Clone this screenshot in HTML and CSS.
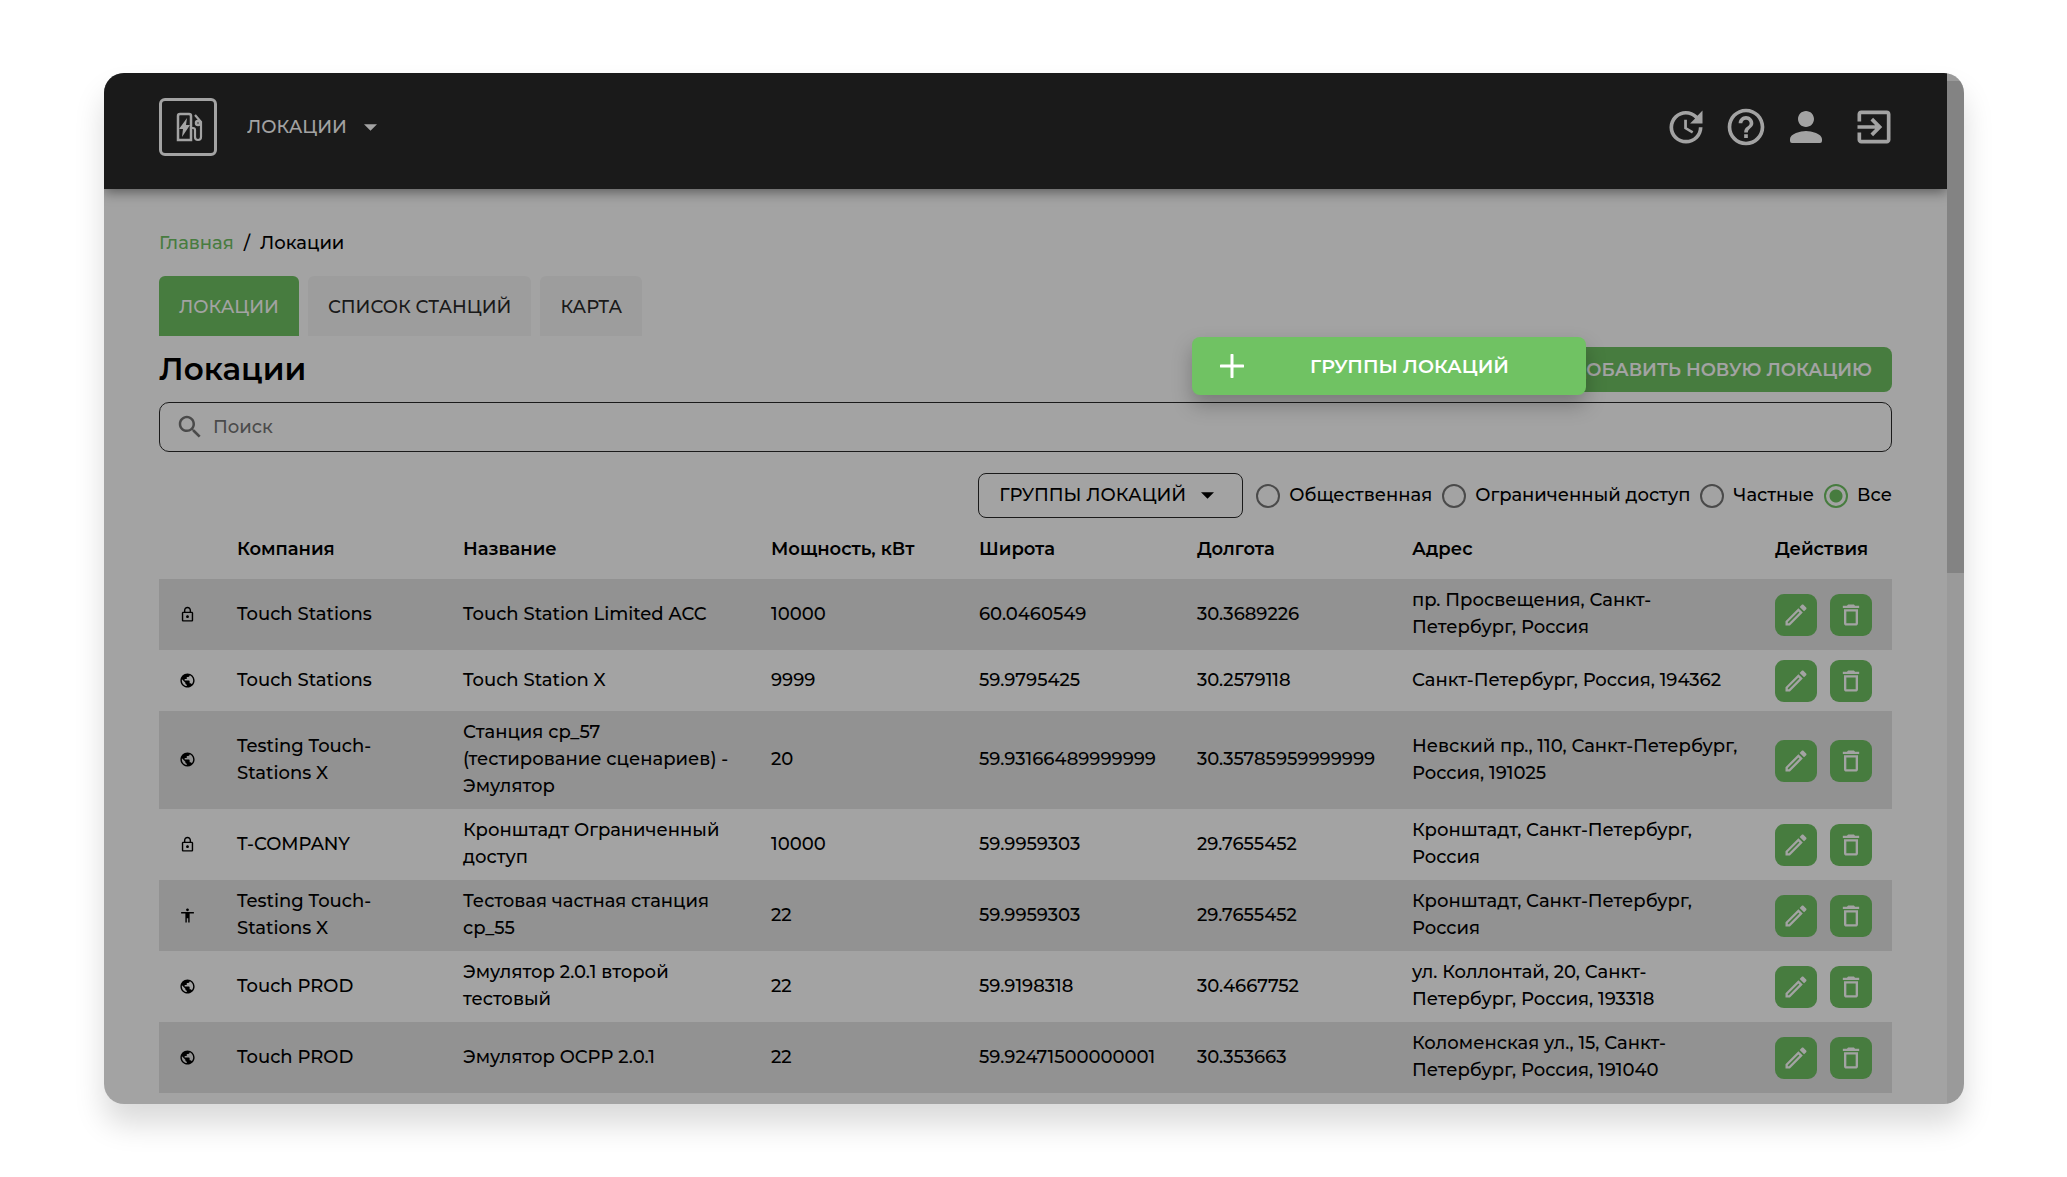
FILE: index.html
```html
<!DOCTYPE html>
<html lang="ru">
<head>
<meta charset="utf-8">
<title>Локации</title>
<link rel="stylesheet" href="styles.css">
</head>
<body>
<svg class="sprite" aria-hidden="true">
  <symbol id="i-lock" viewBox="0 0 24 24"><path d="M18 8h-1V6c0-2.760-2.240-5-5-5S7 3.240 7 6v2H6c-1.100 0-2 .9-2 2v10c0 1.100.9 2 2 2h12c1.100 0 2-.9 2-2V10c0-1.100-.9-2-2-2zM9 6c0-1.660 1.340-3 3-3s3 1.340 3 3v2H9V6zm9 14H6V10h12v10zm-6-3c1.100 0 2-.9 2-2s-.9-2-2-2-2 .9-2 2 .9 2 2 2z"/></symbol>
  <symbol id="i-globe" viewBox="0 0 24 24"><path d="M12 2C6.480 2 2 6.480 2 12s4.480 10 10 10 10-4.480 10-10S17.520 2 12 2zm-1 17.930c-3.950-.49-7-3.850-7-7.930 0-.62.080-1.210.210-1.790L9 15v1c0 1.100.9 2 2 2v1.930zm6.900-2.540c-.26-.81-1-1.390-1.900-1.390h-1v-3c0-.55-.45-1-1-1H8v-2h2c.55 0 1-.45 1-1V7h2c1.100 0 2-.9 2-2v-.41c2.930 1.190 5 4.060 5 7.410 0 2.080-.8 3.970-2.100 5.390z"/></symbol>
  <symbol id="i-man" viewBox="0 0 24 24"><path d="M12 2c1.100 0 2 .9 2 2s-.9 2-2 2-2-.9-2-2 .9-2 2-2zm9 7h-6v13h-2v-6h-2v6H9V9H3V7h18v2z"/></symbol>
  <symbol id="i-edit" viewBox="0 0 24 24"><path d="M14.060 9.020l.92.92L5.920 19H5v-.92l9.060-9.060M17.660 3c-.25 0-.51.1-.7.290l-1.830 1.830 3.750 3.750 1.830-1.830c.39-.39.39-1.020 0-1.410l-2.340-2.340c-.2-.2-.45-.29-.71-.29zm-3.600 3.190L3 17.250V21h3.750L17.810 9.940l-3.750-3.750z"/></symbol>
  <symbol id="i-trash" viewBox="0 0 24 24"><path d="M6 19c0 1.100.9 2 2 2h8c1.100 0 2-.9 2-2V7H6v12zM8 9h8v10H8V9zm7.500-5l-1-1h-5l-1 1H5v2h14V4z"/></symbol>
  <symbol id="i-arrow" viewBox="0 0 12 6"><path d="M0 0h12L6 6z"/></symbol>
</svg>

<div class="window">
  <div class="page">
    <header class="topbar">
      <a class="logo" href="#" aria-label="Touch Stations">
        <svg viewBox="0 0 28 30" width="28" height="30"><g fill="none" stroke="currentColor" stroke-width="2.500"><path d="M2 28V4q0-2 2-2h9q2 0 2 2v24z"/><path stroke-width="2.200" d="M15 16h2q2 0 2 2v7q0 3 3 3t3-3V10l-6-7"/><circle cx="22" cy="11" r="2"/></g><path d="M11 6L3 17h4l-1 8 8-12h-4z" fill="currentColor"/></svg>
      </a>
      <div class="menu">
        <select aria-label="Раздел"><option>ЛОКАЦИИ</option></select>
        <svg class="arrow"><use href="#i-arrow"/></svg>
      </div>
      <nav class="tools">
        <a href="#" aria-label="Обновления"><svg viewBox="0 0 24 24"><path d="M21 10.120h-6.780l2.740-2.820c-2.730-2.700-7.150-2.800-9.880-.1-2.730 2.710-2.730 7.080 0 9.790s7.150 2.710 9.880 0C18.320 15.650 19 14.080 19 12.100h2c0 1.980-.88 4.550-2.640 6.290-3.510 3.480-9.210 3.480-12.720 0-3.500-3.470-3.530-9.110-.02-12.580s9.140-3.470 12.650 0L21 3v7.120zM12.500 8v4.250l3.500 2.080-.72 1.210L11 13V8h1.500z"/></svg></a>
        <a href="#" aria-label="Помощь"><svg viewBox="0 0 24 24"><path d="M11 18h2v-2h-2v2zm1-16C6.480 2 2 6.480 2 12s4.480 10 10 10 10-4.480 10-10S17.520 2 12 2zm0 18c-4.410 0-8-3.590-8-8s3.590-8 8-8 8 3.590 8 8-3.590 8-8 8zm0-14c-2.210 0-4 1.790-4 4h2c0-1.100.9-2 2-2s2 .9 2 2c0 2-3 1.750-3 5h2c0-2.250 3-2.500 3-5 0-2.210-1.790-4-4-4z"/></svg></a>
        <a href="#" aria-label="Профиль"><svg viewBox="1 1 22 22"><path d="M12 12c2.210 0 4-1.790 4-4s-1.790-4-4-4-4 1.790-4 4 1.790 4 4 4zm0 2c-2.670 0-8 1.340-8 4v1q0 1 1 1h14q1 0 1-1v-1c0-2.660-5.330-4-8-4z"/></svg></a>
        <a class="exit" href="#" aria-label="Выход"><svg viewBox="0 0 24 24"><path d="M10.090 15.590L11.500 17l5-5-5-5-1.410 1.410L12.670 11H3v2h9.670l-2.580 2.590zM19 3H5c-1.110 0-2 .9-2 2v4h2V5h14v14H5v-4H3v4c0 1.100.89 2 2 2h14c1.100 0 2-.9 2-2V5c0-1.100-.9-2-2-2z"/></svg></a>
      </nav>
    </header>

    <main class="content">
      <nav class="crumbs"><a href="#">Главная</a><span>/</span><span>Локации</span></nav>

      <nav class="tabs">
        <a class="tab active" href="#">ЛОКАЦИИ</a>
        <a class="tab" href="#">СПИСОК СТАНЦИЙ</a>
        <a class="tab" href="#">КАРТА</a>
      </nav>

      <div class="heading">
        <h1>Локации</h1>
        <button class="add" type="button">ДОБАВИТЬ НОВУЮ ЛОКАЦИЮ</button>
        <button class="spotlight" type="button">
          <svg viewBox="0 0 24 24" width="24" height="24"><path d="M12 1v22M1 12h22" stroke="currentColor" stroke-width="3" stroke-linecap="round"/></svg>
          <span>ГРУППЫ ЛОКАЦИЙ</span>
        </button>
      </div>

      <label class="search">
        <svg viewBox="0 0 24 24" width="30" height="30"><path d="M15.500 14h-.79l-.28-.27C15.410 12.590 16 11.110 16 9.500 16 5.910 13.090 3 9.500 3S3 5.910 3 9.500 5.910 16 9.500 16c1.610 0 3.090-.59 4.230-1.570l.27.280v.79l5 4.990L20.490 19l-4.990-5zm-6 0C7.010 14 5 11.990 5 9.500S7.010 5 9.500 5 14 7.010 14 9.500 11.990 14 9.500 14z"/></svg>
        <input type="text" placeholder="Поиск" aria-label="Поиск">
      </label>

      <div class="filters">
        <div class="groups">
          <select aria-label="Группы локаций"><option>ГРУППЫ ЛОКАЦИЙ</option></select>
          <svg class="arrow"><use href="#i-arrow"/></svg>
        </div>
        <label><input type="radio" name="access">Общественная</label>
        <label><input type="radio" name="access">Ограниченный доступ</label>
        <label><input type="radio" name="access">Частные</label>
        <label><input type="radio" name="access" checked>Все</label>
      </div>

      <table class="locations">
        <colgroup><col class="c-icon"><col class="c-company"><col class="c-name"><col class="c-power"><col class="c-lat"><col class="c-lon"><col><col class="c-actions"></colgroup>
        <thead>
          <tr><th></th><th>Компания</th><th>Название</th><th>Мощность, кВт</th><th>Широта</th><th>Долгота</th><th>Адрес</th><th>Действия</th></tr>
        </thead>
        <tbody>
          <tr>
            <td><svg class="kind"><use href="#i-lock"/></svg></td><td>Touch Stations</td><td>Touch Station Limited ACC</td><td>10000</td><td>60.0460549</td><td>30.3689226</td><td>пр. Просвещения, Санкт-<br>Петербург, Россия</td>
            <td class="actions"><button type="button" aria-label="Изменить"><svg><use href="#i-edit"/></svg></button><button type="button" aria-label="Удалить"><svg><use href="#i-trash"/></svg></button></td>
          </tr>
          <tr>
            <td><svg class="kind"><use href="#i-globe"/></svg></td><td>Touch Stations</td><td>Touch Station X</td><td>9999</td><td>59.9795425</td><td>30.2579118</td><td>Санкт-Петербург, Россия, 194362</td>
            <td class="actions"><button type="button" aria-label="Изменить"><svg><use href="#i-edit"/></svg></button><button type="button" aria-label="Удалить"><svg><use href="#i-trash"/></svg></button></td>
          </tr>
          <tr>
            <td><svg class="kind"><use href="#i-globe"/></svg></td><td>Testing Touch-<br>Stations X</td><td>Станция ср_57<br>(тестирование сценариев) -<br>Эмулятор</td><td>20</td><td>59.93166489999999</td><td>30.35785959999999</td><td>Невский пр., 110, Санкт-Петербург,<br>Россия, 191025</td>
            <td class="actions"><button type="button" aria-label="Изменить"><svg><use href="#i-edit"/></svg></button><button type="button" aria-label="Удалить"><svg><use href="#i-trash"/></svg></button></td>
          </tr>
          <tr>
            <td><svg class="kind"><use href="#i-lock"/></svg></td><td>T-COMPANY</td><td>Кронштадт Ограниченный<br>доступ</td><td>10000</td><td>59.9959303</td><td>29.7655452</td><td>Кронштадт, Санкт-Петербург,<br>Россия</td>
            <td class="actions"><button type="button" aria-label="Изменить"><svg><use href="#i-edit"/></svg></button><button type="button" aria-label="Удалить"><svg><use href="#i-trash"/></svg></button></td>
          </tr>
          <tr>
            <td><svg class="kind"><use href="#i-man"/></svg></td><td>Testing Touch-<br>Stations X</td><td>Тестовая частная станция<br>ср_55</td><td>22</td><td>59.9959303</td><td>29.7655452</td><td>Кронштадт, Санкт-Петербург,<br>Россия</td>
            <td class="actions"><button type="button" aria-label="Изменить"><svg><use href="#i-edit"/></svg></button><button type="button" aria-label="Удалить"><svg><use href="#i-trash"/></svg></button></td>
          </tr>
          <tr>
            <td><svg class="kind"><use href="#i-globe"/></svg></td><td>Touch PROD</td><td>Эмулятор 2.0.1 второй<br>тестовый</td><td>22</td><td>59.9198318</td><td>30.4667752</td><td>ул. Коллонтай, 20, Санкт-<br>Петербург, Россия, 193318</td>
            <td class="actions"><button type="button" aria-label="Изменить"><svg><use href="#i-edit"/></svg></button><button type="button" aria-label="Удалить"><svg><use href="#i-trash"/></svg></button></td>
          </tr>
          <tr>
            <td><svg class="kind"><use href="#i-globe"/></svg></td><td>Touch PROD</td><td>Эмулятор OCPP 2.0.1</td><td>22</td><td>59.92471500000001</td><td>30.353663</td><td>Коломенская ул., 15, Санкт-<br>Петербург, Россия, 191040</td>
            <td class="actions"><button type="button" aria-label="Изменить"><svg><use href="#i-edit"/></svg></button><button type="button" aria-label="Удалить"><svg><use href="#i-trash"/></svg></button></td>
          </tr>
        </tbody>
      </table>
    </main>
  </div>
  <div class="scrollbar"><div class="thumb"></div></div>
  <div class="shade"></div>
</div>
</body>
</html>
```

FILE: styles.css
```css
* { box-sizing: border-box; }

body {
  margin: 0;
  background: #fff;
  color: #000;
  font: 500 18px/27px "Montserrat", "Inter", sans-serif;
}

a { color: inherit; text-decoration: none; }
button, input, select { margin: 0; font: inherit; color: inherit; }
button { border: 0; cursor: pointer; }
svg { display: block; fill: currentColor; }
.sprite { display: none; }

.window {
  position: relative;
  display: flex;
  min-height: calc(100vh - 147px);
  margin: 73px 103px 74px 104px;
  border-radius: 20px;
  overflow: clip;
  background: #fff;
  box-shadow: 0 20px 30px rgba(0, 0, 0, .15);
}

.page { flex: 1; min-width: 0; }

.scrollbar { width: 17px; padding-top: 8px; background: #f1f1f1; }
.thumb { height: 492px; background: #cdcdcd; }

/* Dims everything except the highlighted button */
.shade {
  position: absolute;
  inset: 0;
  z-index: 1;
  background: rgba(0, 0, 0, .36);
  pointer-events: none;
}

.topbar {
  display: flex;
  align-items: center;
  height: 116px;
  padding: 0 51px 8px 55px;
  background: #2a2a2a;
  color: #fff;
  box-shadow: 0 3px 12px rgba(0, 0, 0, .45);
}
.logo {
  display: flex;
  align-items: center;
  justify-content: center;
  width: 58px;
  height: 58px;
  padding-left: 4px;
  border: 3px solid #fff;
  border-radius: 6px;
}
.menu, .groups { position: relative; display: flex; }
.menu { margin-left: 30px; }
.menu select, .groups select {
  appearance: none;
  border: 0;
  background: transparent;
  outline: 0;
}
.menu select { width: 130px; padding: 0; }
.arrow {
  position: absolute;
  top: 0;
  bottom: 0;
  right: 0;
  width: 13px;
  height: 7px;
  margin: auto 0;
  pointer-events: none;
}
.tools { display: flex; gap: 16px; margin-left: auto; }
.tools svg { width: 44px; height: 44px; }
.tools .exit { margin-left: 8px; }

.content { padding: 41px 55px 11px; }

.crumbs { display: flex; gap: 10px; }
.crumbs a { color: #70c263; }

.tabs { display: flex; gap: 9px; margin-top: 19px; }
.tab {
  padding: 18px 20px 15px;
  border-radius: 6px 6px 0 0;
  background: #f6f6f6;
  color: #2a2a2a;
}
.tab.active { background: #70c263; color: #fff; }

.heading {
  position: relative;
  display: flex;
  align-items: center;
  justify-content: space-between;
  height: 45px;
  margin-top: 11px;
}
h1 { margin: 0; font-size: 31px; line-height: 45px; font-weight: 600; }
.add {
  height: 45px;
  padding: 1px 20px 0;
  border-radius: 8px;
  background: #70c263;
  color: #fff;
  font-weight: 600;
}
.spotlight {
  position: absolute;
  z-index: 2;
  top: -10px;
  right: 306px;
  display: flex;
  align-items: center;
  width: 394px;
  height: 58px;
  padding: 0 11px 0 28px;
  border-radius: 8px;
  background: #70c263;
  color: #fff;
  font-size: 19px;
  font-weight: 600;
  box-shadow: 0 10px 20px rgba(0, 0, 0, .25);
}
.spotlight span { flex: 1; text-align: center; }

.search {
  display: flex;
  align-items: center;
  gap: 8px;
  height: 50px;
  margin-top: 10px;
  padding: 0 15px;
  border: 1px solid #2a2a2a;
  border-radius: 10px;
  color: #757575;
}
.search input { flex: 1; padding: 0; border: 0; outline: 0; background: transparent; }
.search input::placeholder { color: #757575; opacity: 1; }

.filters {
  display: flex;
  align-items: center;
  justify-content: flex-end;
  gap: 10px;
  margin-top: 21px;
}
.filters label { display: flex; align-items: center; gap: 9px; }
.groups { margin-right: 3px; }
.groups select {
  width: 265px;
  height: 45px;
  padding: 0 20px;
  border: 1px solid #2a2a2a;
  border-radius: 8px;
}
.groups .arrow { right: 29px; }
.filters input {
  appearance: none;
  width: 24px;
  height: 24px;
  border: 2px solid #757575;
  border-radius: 50%;
}
.filters input:checked {
  border-color: #70c263;
  background: radial-gradient(circle, #70c263 6px, transparent 7px);
}

.locations {
  width: 100%;
  margin-top: 18px;
  border-collapse: collapse;
  table-layout: fixed;
}
.c-icon { width: 58px; }
.c-company { width: 226px; }
.c-name { width: 308px; }
.c-power { width: 208px; }
.c-lat { width: 218px; }
.c-lon { width: 215px; }
.c-actions { width: 137px; }
th, td { padding: 8px 0 9px 20px; text-align: left; white-space: nowrap; }
th { padding: 0 0 16px 20px; font-weight: 600; }
tbody tr:nth-child(odd) { background: #e4e4e4; }
.kind { width: 17px; height: 17px; }
.actions { padding: 10px 0 9px 20px; line-height: 0; }
.actions button {
  display: inline-block;
  width: 42px;
  height: 42px;
  padding: 7px;
  border-radius: 9px;
  background: #70c263;
  color: #fff;
  vertical-align: top;
}
.actions button + button { margin-left: 13px; }
.actions svg { width: 28px; height: 28px; }
```
